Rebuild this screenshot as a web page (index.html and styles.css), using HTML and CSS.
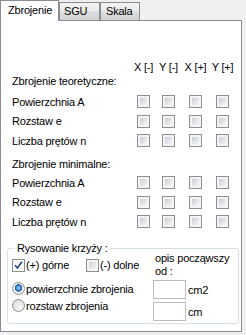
FILE: index.html
```html
<!DOCTYPE html>
<html lang="pl">
<head>
    <meta charset="UTF-8">
    <title>Zbrojenie</title>
    <link rel="stylesheet" href="styles.css">
</head>
<body>
    <div class="tabs">
        <div class="tab active">Zbrojenie</div>
        <div class="tab sgu">SGU</div>
        <div class="tab skala">Skala</div>
    </div>
    <div class="panel">
        <div class="grid-row head">
            <span></span>
            <span>X [-]</span>
            <span>Y [-]</span>
            <span>X [+]</span>
            <span>Y [+]</span>
        </div>

        <div class="section-title">Zbrojenie teoretyczne:</div>
        <div class="grid-row">
            <span>Powierzchnia A</span>
            <span class="cb"></span><span class="cb"></span><span class="cb"></span><span class="cb"></span>
        </div>
        <div class="grid-row">
            <span>Rozstaw e</span>
            <span class="cb"></span><span class="cb"></span><span class="cb"></span><span class="cb"></span>
        </div>
        <div class="grid-row">
            <span>Liczba prętów n</span>
            <span class="cb"></span><span class="cb"></span><span class="cb"></span><span class="cb"></span>
        </div>

        <div class="section-title second">Zbrojenie minimalne:</div>
        <div class="grid-row">
            <span>Powierzchnia A</span>
            <span class="cb"></span><span class="cb"></span><span class="cb"></span><span class="cb"></span>
        </div>
        <div class="grid-row">
            <span>Rozstaw e</span>
            <span class="cb"></span><span class="cb"></span><span class="cb"></span><span class="cb"></span>
        </div>
        <div class="grid-row">
            <span>Liczba prętów n</span>
            <span class="cb"></span><span class="cb"></span><span class="cb"></span><span class="cb"></span>
        </div>

        <fieldset class="group">
            <legend>Rysowanie krzyży :</legend>
            <div class="group-body">
                <div class="group-left">
                    <div class="check-line">
                        <label class="opt first">
                            <span class="cb checked">
                                <svg width="9" height="9" viewBox="0 0 9 9"><path d="M1 4.2 L3.4 7 L8 0.8" fill="none" stroke="#21468c" stroke-width="1.7"/></svg>
                            </span>(+) górne
                        </label>
                        <label class="opt"><span class="cb"></span>(-) dolne</label>
                    </div>
                    <label class="opt radio-line top"><span class="rb on"></span>powierzchnie zbrojenia</label>
                    <label class="opt radio-line"><span class="rb"></span>rozstaw zbrojenia</label>
                </div>
                <div class="group-right">
                    <div class="opis">opis począwszy od :</div>
                    <div class="unit-line first"><span class="box"></span>cm2</div>
                    <div class="unit-line"><span class="box"></span>cm</div>
                </div>
            </div>
        </fieldset>
    </div>
</body>
</html>
```

FILE: styles.css
```css
body {
    margin: 0;
    width: 246px;
    height: 335px;
    background-color: #f0f0f0;
    font-family: 'Liberation Sans', Arial, sans-serif;
    font-size: 11px;
    letter-spacing: -0.2px;
    color: #000;
    overflow: hidden;
}

/* Tabs */
.tabs {
    display: flex;
    align-items: flex-end;
    height: 20px;
}

.tab {
    height: 17px;
    line-height: 17px;
    border: 1px solid #898c95;
    border-bottom: none;
    background: linear-gradient(#f3f3f3, #ebebeb 50%, #dedede 50%, #d2d2d2);
    box-sizing: content-box;
}

.tab.active {
    position: relative;
    z-index: 1;
    width: 50px;
    height: 20px;
    line-height: 18px;
    padding-left: 7px;
    margin-bottom: -1px;
    background: #fff;
}

.tab.sgu {
    width: 35px;
    padding-left: 4px;
}

.tab.skala {
    width: 33px;
    padding-left: 5px;
}

/* Panel */
.panel {
    width: 240px;
    border: 1px solid #898c95;
    background-color: #fff;
    padding: 38px 0 7px 0;
}

.grid-row {
    display: grid;
    grid-template-columns: 119px 25px 25px 29px 25px;
    align-items: center;
    height: 19.5px;
    padding-left: 11px;
    white-space: nowrap;
}

.grid-row.head {
    height: 15px;
}

.grid-row.head span {
    text-align: center;
}

.grid-row .cb {
    justify-self: center;
}

.section-title {
    height: 18px;
    line-height: 14px;
    padding-left: 11px;
}

.section-title.second {
    height: 16px;
    padding-top: 6.5px;
}

/* Checkbox + radio */
.cb {
    display: inline-block;
    width: 7px;
    height: 7px;
    padding: 2px;
    border: 1px solid #8e8f8f;
    background: linear-gradient(135deg, #c9cdd3, #f7f7f7) content-box, #f4f4f4;
    box-shadow: inset 0 0 0 2px #f4f4f4;
    flex-shrink: 0;
}

.cb.checked {
    width: 9px;
    height: 9px;
    padding: 1px;
    background: #fff;
    box-shadow: none;
}

.cb.checked svg {
    display: block;
}

.rb {
    display: inline-block;
    width: 11px;
    height: 11px;
    border: 1px solid #8e8f8f;
    border-radius: 50%;
    background: radial-gradient(circle at 65% 70%, #f8f8f8, #d2d5da);
    flex-shrink: 0;
}

.rb.on {
    background: radial-gradient(circle at 50% 45%, #a9d6f7 0, #4a90d4 2px, #1b5aa3 3.5px, #f4f4f4 4px, #e4e6e9 6px);
}

/* Group box */
.group {
    margin: 10.5px 2px 0 6px;
    padding: 3px 2px 2px 4px;
    border: 1px solid #d5dfe5;
    border-radius: 3px;
    min-width: 0;
}

.group legend {
    margin-left: 3px;
    padding: 0 2px;
    line-height: 13px;
}

.group-body {
    display: flex;
}

.group-left {
    width: 141px;
}

.opt {
    display: flex;
    align-items: center;
    gap: 1px;
    white-space: nowrap;
}

.check-line {
    display: flex;
    height: 14px;
    align-items: center;
}

.opt.first {
    width: 74px;
}

.radio-line {
    height: 17px;
}

.radio-line.top {
    margin-top: 8px;
}

.group-right {
    flex: 1;
    margin-top: -6.5px;
}

.opis {
    line-height: 13px;
    padding-left: 2px;
}

.unit-line {
    display: flex;
    align-items: center;
    gap: 2px;
    margin-top: 3px;
}

.unit-line.first {
    margin-top: 2.5px;
}

.box {
    width: 31px;
    height: 17px;
    border: 1px solid #b9bcc2;
    background: #fff;
}
```
